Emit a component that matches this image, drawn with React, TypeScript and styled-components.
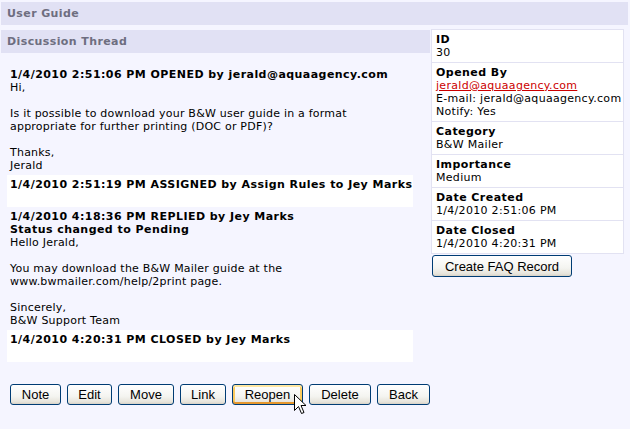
import React from "react";
import styled, { createGlobalStyle } from "styled-components";

const GlobalStyle = createGlobalStyle`
  html, body {
    margin: 0;
    padding: 0;
    background: #f5f5ff;
  }
  body {
    font-family: Verdana, "DejaVu Sans", sans-serif;
    font-size: 11px;
    letter-spacing: 0.22px;
    color: #000;
  }
`;

const Page = styled.div`
  position: relative;
  width: 630px;
  height: 429px;
  padding: 2px 2px 0 1px;
  box-sizing: border-box;
`;

const Bar = styled.div<{ $mt?: number }>`
  height: 23px;
  line-height: 23px;
  margin-top: ${(p) => p.$mt ?? 0}px;
  padding-left: 6px;
  background: #e1e1f4;
  color: #6e6e80;
  font-weight: bold;
  font-size: 11px;
  letter-spacing: 0.4px;
`;

const Columns = styled.div`
  display: flex;
  align-items: flex-start;
  margin-top: 4px;
  gap: 1px;
`;

const LeftCol = styled.div`
  width: 429px;
  flex: none;
`;

const Thread = styled.div`
  width: 406px;
  padding: 12px 0 0 6px;
`;

const Event = styled.div<{ $alt: boolean }>`
  background: ${(p) => (p.$alt ? "#ffffff" : "transparent")};
  padding: 3px 3px;
  line-height: 13px;
  min-height: 26px;
  white-space: nowrap;
`;

const EventHead = styled.div`
  font-weight: bold;
  letter-spacing: 0.45px;
`;

const Body = styled.div`
  white-space: pre-line;
`;

const ButtonRow = styled.div`
  display: flex;
  gap: 6px;
  padding: 22px 0 0 9px;
`;

const Btn = styled.button<{ $hover?: boolean; $w: number }>`
  width: ${(p) => p.$w}px;
  height: 21px;
  padding: 0;
  border: 1px solid #003c74;
  border-radius: 3px;
  background: linear-gradient(#ffffff 0%, #f4f4f0 60%, #e6e3da 90%, #d6d0c5 100%);
  font-family: "Liberation Sans", Arial, sans-serif;
  font-size: 13px;
  letter-spacing: 0;
  color: #000;
  line-height: 19px;
  box-shadow: ${(p) =>
    p.$hover
      ? "inset 0 2px 0 #ffe7a2, inset 0 -2px 0 #e5972d, inset 2px 0 0 #fbca5e, inset -2px 0 0 #fbca5e"
      : "none"};
  cursor: default;
`;

const Panel = styled.div`
  width: 193px;
  flex: none;
`;

const Cells = styled.div`
  border: 1px solid #e2e2f2;
  background: #fff;
`;

const Cell = styled.div`
  padding: 3px 4px;
  line-height: 13px;
  white-space: nowrap;
  letter-spacing: 0.3px;
  & + & {
    border-top: 1px solid #e2e2f2;
  }
`;

const Label = styled.div`
  font-weight: bold;
  letter-spacing: 0.45px;
`;

const Link = styled.a`
  color: #cc0000;
  text-decoration: underline;
`;

const FaqBtn = styled(Btn)`
  margin: 1px 0 0 1px;
  height: 22px;
`;

const Cursor = styled.svg`
  position: absolute;
  left: 294px;
  top: 394px;
`;

const events = [
  {
    head: "1/4/2010 2:51:06 PM OPENED by jerald@aquaagency.com",
    body: "Hi,\n\nIs it possible to download your B&W user guide in a format\nappropriate for further printing (DOC or PDF)?\n\nThanks,\nJerald",
  },
  { head: "1/4/2010 2:51:19 PM ASSIGNED by Assign Rules to Jey Marks", body: "" },
  {
    head: "1/4/2010 4:18:36 PM REPLIED by Jey Marks",
    sub: "Status changed to Pending",
    body: "Hello Jerald,\n\nYou may download the B&W Mailer guide at the\nwww.bwmailer.com/help/2print page.\n\nSincerely,\nB&W Support Team",
  },
  { head: "1/4/2010 4:20:31 PM CLOSED by Jey Marks", body: "" },
];

const buttons: { t: string; w: number; hover?: boolean }[] = [
  { t: "Note", w: 51 },
  { t: "Edit", w: 45 },
  { t: "Move", w: 56 },
  { t: "Link", w: 46 },
  { t: "Reopen", w: 71, hover: true },
  { t: "Delete", w: 62 },
  { t: "Back", w: 53 },
];

export default function App() {
  return (
    <>
      <GlobalStyle />
      <Page>
        <Bar>User Guide</Bar>
        <Columns>
          <LeftCol>
            <Bar $mt={1}>Discussion Thread</Bar>
            <Thread>
              {events.map((e, i) => (
                <Event key={i} $alt={i % 2 === 1}>
                  <EventHead>{e.head}</EventHead>
                  {e.sub && <EventHead>{e.sub}</EventHead>}
                  {e.body && <Body>{e.body}</Body>}
                </Event>
              ))}
            </Thread>
            <ButtonRow>
              {buttons.map((b) => (
                <Btn key={b.t} $w={b.w} $hover={b.hover}>
                  {b.t}
                </Btn>
              ))}
            </ButtonRow>
          </LeftCol>
          <Panel>
            <Cells>
              <Cell>
                <Label>ID</Label>
                <div>30</div>
              </Cell>
              <Cell>
                <Label>Opened By</Label>
                <Link href="#">jerald@aquaagency.com</Link>
                <div>E-mail: jerald@aquaagency.com</div>
                <div>Notify: Yes</div>
              </Cell>
              <Cell>
                <Label>Category</Label>
                <div>B&amp;W Mailer</div>
              </Cell>
              <Cell>
                <Label>Importance</Label>
                <div>Medium</div>
              </Cell>
              <Cell>
                <Label>Date Created</Label>
                <div>1/4/2010 2:51:06 PM</div>
              </Cell>
              <Cell>
                <Label>Date Closed</Label>
                <div>1/4/2010 4:20:31 PM</div>
              </Cell>
            </Cells>
            <FaqBtn $w={140}>Create FAQ Record</FaqBtn>
          </Panel>
        </Columns>
        <Cursor width="13" height="21" viewBox="0 0 13 21">
          <path
            d="M0.5 0.5 L0.5 16.5 L4.5 12.5 L7.5 19.5 L10 18.5 L7 11.5 L12 11.5 Z"
            fill="#fff"
            stroke="#000"
            strokeWidth="1"
            strokeLinejoin="miter"
          />
        </Cursor>
      </Page>
    </>
  );
}
